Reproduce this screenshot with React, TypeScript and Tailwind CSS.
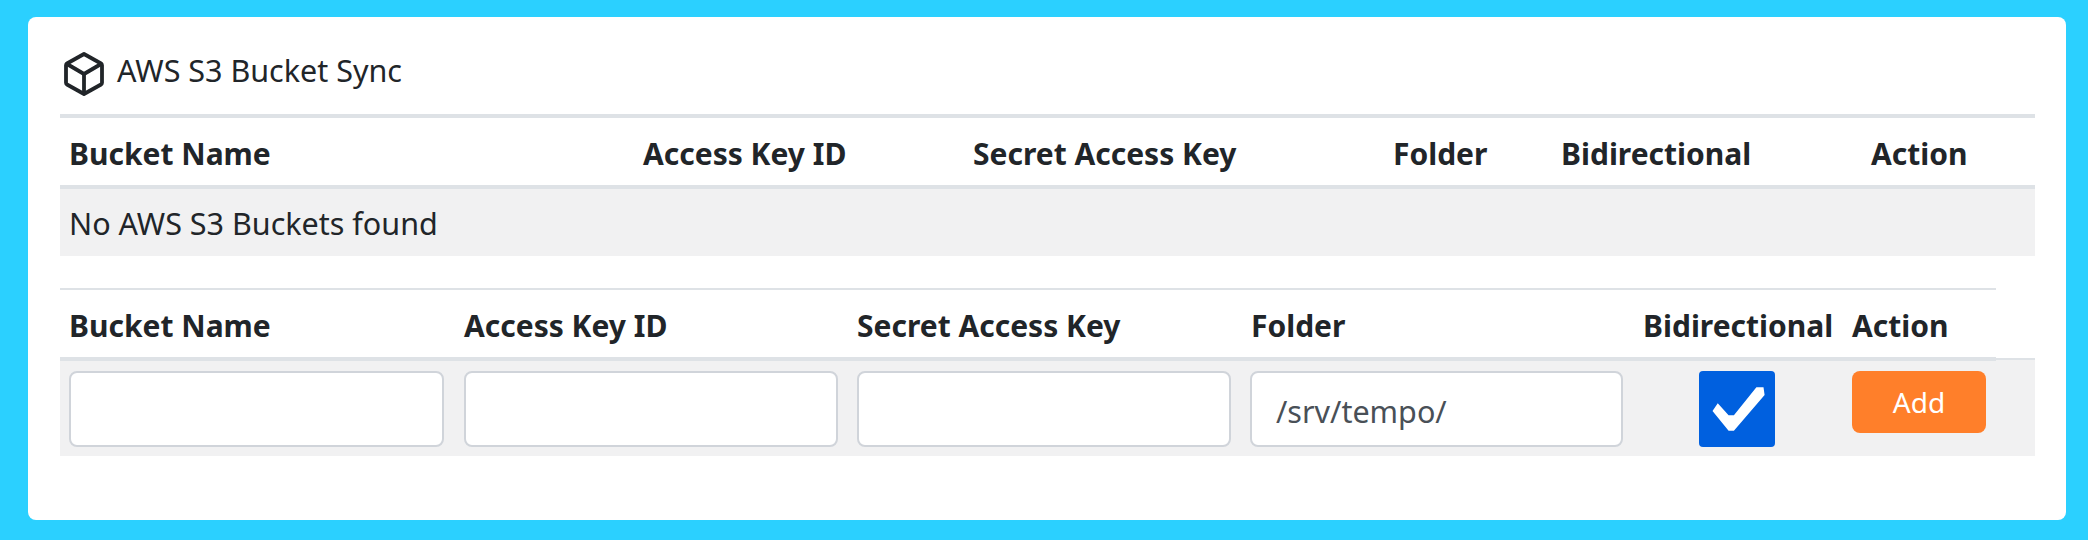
import React from 'react';

const FONT = "font-['Noto_Sans','Open_Sans',sans-serif]";

const TOP_HEADERS = ['Bucket Name', 'Access Key ID', 'Secret Access Key', 'Folder', 'Bidirectional', 'Action'];
const FORM_HEADERS = TOP_HEADERS;

const BoxIcon: React.FC = () => (
  <svg viewBox="0 0 40 44" className="w-10 h-11 shrink-0" fill="none" stroke="#212529" strokeWidth="3.8" strokeLinejoin="round" strokeLinecap="round">
    <path d="M20 2 L37 11.5 a2 2 0 0 1 1 1.7 V30.8 a2 2 0 0 1 -1 1.7 L20 42 L3 32.5 a2 2 0 0 1 -1 -1.7 V13.2 a2 2 0 0 1 1 -1.7 Z" />
    <path d="M3 12 L20 22 L37 12" />
    <path d="M20 22 V41" />
  </svg>
);

const TextInput: React.FC<{ value?: string; className: string }> = ({ value, className }) => (
  <input
    readOnly
    value={value ?? ''}
    className={`h-[76px] rounded-lg border-2 border-[#d0d4da] bg-white pl-6 pt-[4px] text-[30.5px] text-[#495057] outline-none ${FONT} ${className}`}
  />
);

export default function App() {
  return (
    <div className={`h-[540px] bg-[#2bd0ff] pt-[17px] pl-[28px] pr-[22px] text-[#212529] ${FONT}`}>
      <div className="h-[503px] rounded-lg bg-white pl-[32px] pr-[31px] pt-[35px]">
        {/* Title */}
        <div className="flex items-center gap-[13px] h-[44px] pl-[4px]">
          <BoxIcon />
          <span className="text-[30.5px] pb-[6px]">AWS S3 Bucket Sync</span>
        </div>

        {/* Existing buckets */}
        <div className="mt-[18px] border-t-4 border-[#dee2e6]">
          <div className="grid grid-cols-[573px_330px_420px_168px_310px_1fr] h-[71px] items-center border-b-4 border-[#dee2e6] text-[30px] font-bold">
            {TOP_HEADERS.map((h, i) => (
              <div key={h} className={i === 0 ? 'pl-[9px] pt-[3px]' : 'pl-[10px] pt-[3px]'}>{h}</div>
            ))}
          </div>
          <div className="h-[67px] flex items-center bg-[#f1f1f2] pl-[9px] pt-[2px] text-[30.5px]">
            No AWS S3 Buckets found
          </div>
        </div>

        {/* Add new bucket */}
        <div className="mt-[32px] flex">
          <div className="w-[1936px] border-t-2 border-[#dee2e6]">
            <div className="grid grid-cols-[395px_393px_394px_392px_208px_1fr] h-[71px] items-center border-b-4 border-[#dee2e6] text-[30px] font-bold">
              {FORM_HEADERS.map((h, i) => (
                <div key={h} className={i === 5 ? 'pl-[10px] pt-[3px]' : 'pl-[9px] pt-[3px]'}>{h}</div>
              ))}
            </div>
          </div>
          <div className="flex-1 flex flex-col justify-end">
            <div className="h-[3px] border-t-2 border-[#dee2e6] bg-[#f1f1f2]" />
          </div>
        </div>
        <div className="grid grid-cols-[395px_393px_394px_392px_208px_1fr] h-[95px] bg-[#f1f1f2] pt-[10px] items-start">
          <div className="pl-[9px]"><TextInput className="w-[375px]" /></div>
          <div className="pl-[9px]"><TextInput className="w-[374px]" /></div>
          <div className="pl-[9px]"><TextInput className="w-[374px]" /></div>
          <div className="pl-[8px]"><TextInput value="/srv/tempo/" className="w-[373px]" /></div>
          <div className="pl-[65px]">
            <div className="w-[76px] h-[76px] rounded-[4px] bg-[#0060df]">
              <svg viewBox="0 0 76 76" className="w-full h-full" fill="#ffffff">
                <polygon points="13.5,40 18.75,32.3 29.6,44.3 34.9,44.3 57.4,16.3 64.5,16.3 65.6,24 34.9,59.7 29.6,59.7" />
              </svg>
            </div>
          </div>
          <div className="pl-[10px]">
            <button className="w-[134px] h-[62px] rounded-lg bg-[#ff7f2a] text-[28px] text-white">Add</button>
          </div>
        </div>
      </div>
    </div>
  );
}
